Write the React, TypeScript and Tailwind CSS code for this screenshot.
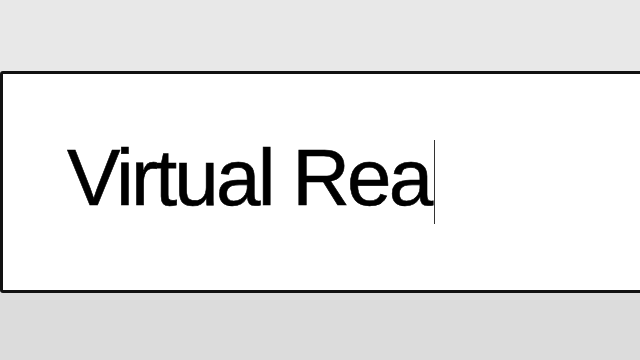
export default function App() {
  return (
    <div className="w-[640px] h-[360px] overflow-hidden flex flex-col bg-[#e8e8e8]">
      <div className="h-[71px] shrink-0 bg-[#e8e8e8]" />
      <div className="h-[222px] shrink-0 w-[660px] bg-white border-[3px] border-[#111] rounded-[3px] flex items-center pl-[64px]">
        <span className="text-[80px] leading-none text-black tracking-[-2.8px] mb-[8px] [-webkit-text-stroke:0.6px_black]" style={{ fontFamily: '"Liberation Sans", Arial, sans-serif' }}>
          Virtual Rea
        </span>
        <span className="w-px h-[84px] bg-[#333] ml-[3px]" />
      </div>
      <div className="flex-1 bg-[#dcdcdc]" />
    </div>
  );
}
